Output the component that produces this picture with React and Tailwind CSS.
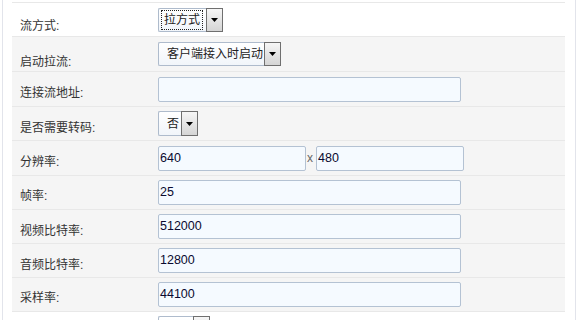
import React from 'react';

const FONT = "font-['Liberation_Sans','Noto_Sans_CJK_SC',sans-serif]";

const rows = [
  { label: '流方式:', h: 'h-[34px]', pt: 'pt-[17px]', bg: 'bg-white', kind: 'select', value: '拉方式', textW: 'w-[48px]', focused: true },
  { label: '启动拉流:', h: 'h-[35px]', pt: 'pt-[19px]', bg: 'bg-[#f5f5f5]', kind: 'select', value: '客户端接入时启动', textW: 'w-[106px]' },
  { label: '连接流地址:', h: 'h-[35px]', pt: 'pt-[15px]', bg: 'bg-[#f5f5f5]', kind: 'input', value: '' },
  { label: '是否需要转码:', h: 'h-[34px]', pt: 'pt-[15px]', bg: 'bg-[#f5f5f5]', kind: 'select', value: '否', textW: 'w-[23px]', tall: true },
  { label: '分辨率:', h: 'h-[35px]', pt: 'pt-[15px]', bg: 'bg-[#f5f5f5]', kind: 'size', value: '640', value2: '480' },
  { label: '帧率:', h: 'h-[34px]', pt: 'pt-[14px]', bg: 'bg-[#f5f5f5]', kind: 'input', value: '25' },
  { label: '视频比特率:', h: 'h-[34px]', pt: 'pt-[15px]', bg: 'bg-[#f5f5f5]', kind: 'input', value: '512000' },
  { label: '音频比特率:', h: 'h-[34px]', pt: 'pt-[15px]', bg: 'bg-[#f5f5f5]', kind: 'input', value: '12800' },
  { label: '采样率:', h: 'h-[34px]', pt: 'pt-[14px]', bg: 'bg-[#f5f5f5]', kind: 'input', value: '44100' },
  { label: '', h: 'h-[34px]', pt: 'pt-[15px]', bg: 'bg-white', kind: 'select', value: '', textW: 'w-[35px]', tall: true },
];

const Arrow = () => (
  <svg width="7" height="4" viewBox="0 0 7 4">
    <path d="M0 0H7L3.5 4Z" fill="#000" />
  </svg>
);

const Select = ({ value, textW, focused, tall }) => (
  <div className={`flex ${tall ? 'h-[25px]' : 'h-[24px]'}`}>
    <div className={`${textW} flex items-center border-y border-l border-[#aebbcc] rounded-l-[2px] bg-gradient-to-b from-white to-[#f1f5fa] text-[12px] text-[#222] ${focused ? 'pl-[2px]' : 'pl-[8px]'}`}>
      {focused ? (
        <span className="border border-dotted border-[#222] px-[2px] leading-[18px] h-[20px]">{value}</span>
      ) : (
        value
      )}
    </div>
    <div className="w-[17px] flex items-center justify-center border border-[#6f6f6f] bg-gradient-to-b from-[#f6f6f6] to-[#d5d5d5]">
      <Arrow />
    </div>
  </div>
);

const Input = ({ value, w = 'w-[303px]' }) => (
  <div className={`${w} h-[25px] flex items-center pl-px border border-[#b4c2d3] rounded-[2px] bg-[#f5faff] text-[12.5px] text-[#0a0a30]`}>
    {value}
  </div>
);

export default function App() {
  return (
    <div className={`w-[576px] h-[320px] overflow-hidden bg-white ${FONT}`}>
      <div className="ml-[2px] w-[574px] h-full border-x border-[#e2e4eb] pl-[9px] pr-[10px] pt-[2px]">
        {rows.map((r, i) => (
          <div key={i} className={`flex ${r.h} border-t border-[#e8e8e8] ${r.bg}`}>
            <div className={`w-[146px] pl-[8px] ${r.pt} text-[12px] leading-[12px] text-[#333]`}>{r.label}</div>
            <div className="flex-1 flex items-center">
              {r.kind === 'select' && <Select value={r.value} textW={r.textW} focused={r.focused} tall={r.tall} />}
              {r.kind === 'input' && <Input value={r.value} />}
              {r.kind === 'size' && (
                <>
                  <Input value={r.value} w="w-[148px]" />
                  <span className="w-[10px] pl-px text-[12px] text-[#666]">x</span>
                  <Input value={r.value2} w="w-[148px]" />
                </>
              )}
            </div>
          </div>
        ))}
      </div>
    </div>
  );
}
